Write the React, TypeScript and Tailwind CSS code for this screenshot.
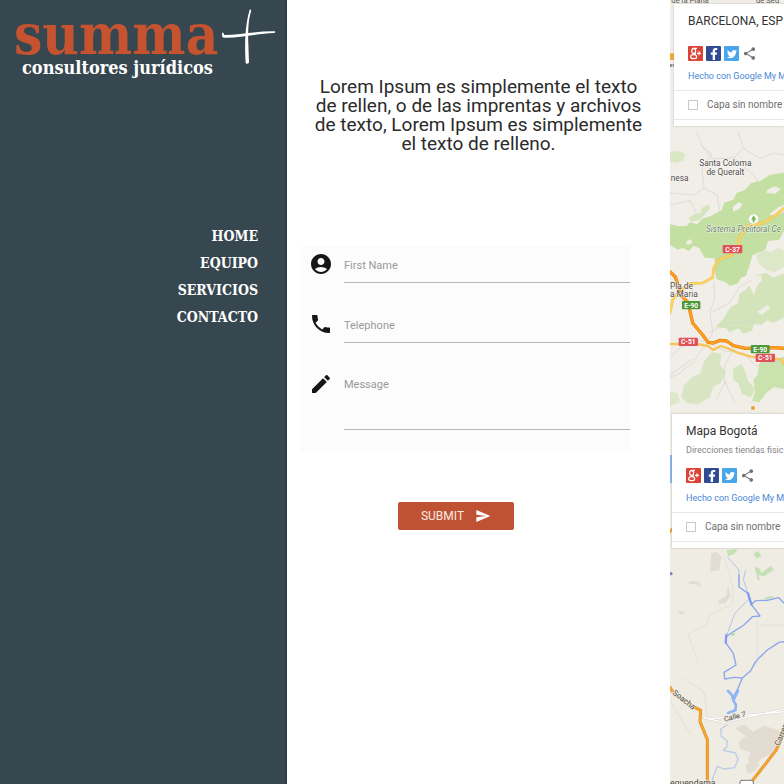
import type { ReactNode } from "react";
import { MdAccountCircle, MdPhone, MdEdit, MdSend, MdShare } from "react-icons/md";
import { FaFacebookF, FaTwitter } from "react-icons/fa";

const slab = "font-['DejaVu_Serif_Condensed','DejaVu_Serif',serif] font-bold";

const navItems = ["HOME", "EQUIPO", "SERVICIOS", "CONTACTO"];

function Sidebar() {
  return (
    <aside className="w-[287px] shrink-0 border-r-2 border-[#2f3e46] bg-[#37474f]">
      <a href="#" className="flex h-[90px] items-start gap-[4px] pl-[14px]">
        <span className={`${slab} flex flex-col pt-[2px]`}>
          <span className="h-[57px] text-[56px] leading-[65px] text-[#c5532f]">summa</span>
          <span className="pl-[8px] text-[18px] leading-[18px] text-white">consultores jurídicos</span>
        </span>
        <svg viewBox="0 0 162 174" className="mt-[8px] h-[58px] w-[54px]" aria-hidden="true">
          <path d="M83 5c3-2 6 0 4 5-9 31-9 64-8 97l2 56c0 5-9 6-10 1-3-52-3-109 12-159z" fill="#fff" />
          <path d="M1 74c3-1 5 4 6 7 50-1 97-12 151-11 3 1 2 4-1 5-52 2-97 13-146 14-6 1-11-1-11-6 1-3 0-7 1-9z" fill="#fff" />
        </svg>
      </a>
      <nav className="mt-[133px] pr-[27px]">
        <ul className="flex flex-col items-end">
          {navItems.map((item) => (
            <li key={item}>
              <a href="#" className={`${slab} block text-[14px] leading-[27px] text-white`}>
                {item}
              </a>
            </li>
          ))}
        </ul>
      </nav>
    </aside>
  );
}

const fieldClass =
  "min-w-0 flex-1 resize-none rounded-none border-b border-[#b5b5b5] bg-transparent text-[11px] leading-[16px] text-[#333] outline-none placeholder:text-[#999]";

function ContactForm() {
  return (
    <form>
      <div className="flex flex-col gap-[25px] bg-[#fcfcfc] pb-[22px] pl-[9px] pt-[2px]">
        <div className="flex gap-[11px]">
          <label htmlFor="first-name" aria-label="First Name" className="pt-[4px]">
            <MdAccountCircle className="size-6 text-[#161616]" />
          </label>
          <input id="first-name" placeholder="First Name" className={`${fieldClass} h-[35px]`} />
        </div>
        <div className="flex gap-[11px]">
          <label htmlFor="telephone" aria-label="Telephone" className="pt-[4px]">
            <MdPhone className="size-6 text-[#161616]" />
          </label>
          <input id="telephone" type="tel" placeholder="Telephone" className={`${fieldClass} h-[35px]`} />
        </div>
        <div className="flex gap-[11px]">
          <label htmlFor="message" aria-label="Message" className="pt-[4px]">
            <MdEdit className="size-6 text-[#161616]" />
          </label>
          <textarea id="message" placeholder="Message" className={`${fieldClass} h-[62px] pt-[9px]`} />
        </div>
      </div>
      <button
        type="submit"
        className="ml-[98px] mt-[50px] flex h-[28px] w-[116px] items-center justify-center gap-[11px] rounded-[2px] bg-[#bf5233] text-[12px] text-[#fbeae4]"
      >
        SUBMIT
        <MdSend className="size-4 text-white" />
      </button>
    </form>
  );
}

function GooglePlusIcon() {
  return (
    <svg viewBox="0 0 45 45" className="size-[15px]" fill="none" stroke="#fff" strokeWidth="3.5" aria-hidden="true">
      <ellipse cx="17" cy="15" rx="6" ry="7" />
      <path d="M14 7h13M21 21l2 5" />
      <ellipse cx="17" cy="32" rx="9" ry="6" />
      <path d="M33 16v12M27 22h12" />
    </svg>
  );
}

function SocialLink({ label, color, children }: { label: string; color: string; children: ReactNode }) {
  return (
    <a href="#" aria-label={label} className={`flex size-[15px] items-center justify-center rounded-[1px] text-white ${color}`}>
      {children}
    </a>
  );
}

function MapCard({ id, title, subtitle }: { id: string; title: string; subtitle?: string }) {
  return (
    <div className="bg-white whitespace-nowrap shadow-[0_0_2px_rgba(0,0,0,0.2)]">
      <div className="px-[14px] pb-[8px] pt-[8px]">
        <h2 className={`text-[12px] leading-[18px] text-[#333] ${subtitle ? "mb-[4px]" : "mb-[16px]"}`}>{title}</h2>
        {subtitle && <p className="mb-[12px] text-[9px] leading-[12px] text-[#858585]">{subtitle}</p>}
        <div className="flex gap-[3px]">
          <SocialLink label="Google+" color="bg-[#da4336]">
            <GooglePlusIcon />
          </SocialLink>
          <SocialLink label="Facebook" color="bg-[#2f4b93]">
            <FaFacebookF className="size-[12px]" />
          </SocialLink>
          <SocialLink label="Twitter" color="bg-[#4aa6ea]">
            <FaTwitter className="size-[10px]" />
          </SocialLink>
          <a href="#" aria-label="Compartir" className="flex size-[15px] items-center justify-center text-[#737373]">
            <MdShare className="size-[15px]" />
          </a>
        </div>
        <a href="#" className="mt-[9px] block text-[9px] leading-[12px] text-[#4a86d8]">
          Hecho con Google My M
        </a>
      </div>
      <div className="flex h-[30px] items-center gap-[9px] border-y border-[#e8e8e8] px-[14px]">
        <input id={id} type="checkbox" className="size-[10px] shrink-0 appearance-none border border-[#c9c9c9] bg-white" />
        <label htmlFor={id} className="text-[10px] leading-[12px] text-[#707070]">
          Capa sin nombre
        </label>
      </div>
      <div className="h-[6px]" />
    </div>
  );
}

function Shield({ x, y, w, color, children }: { x: number; y: number; w: number; color: string; children: string }) {
  return (
    <g>
      <rect x={x} y={y} width={w} height="25" rx="3" fill={color} />
      <text x={x + w / 2} y={y + 20} textAnchor="middle" fontSize="20" fontWeight="700" fill="#fff">
        {children}
      </text>
    </g>
  );
}

function BarcelonaMap() {
  return (
    <svg
      viewBox="0 0 342 1233"
      preserveAspectRatio="xMinYMin slice"
      className="absolute inset-0 size-full font-[Roboto,sans-serif]"
      role="img"
      aria-label="Mapa de Barcelona"
    >
      <rect width="342" height="1233" fill="#f1eee8" />
      <g transform="translate(-18 0)">
        <text x="22" y="9" fontSize="23" fill="#555">de la Plana</text>
        <text x="276" y="9" fontSize="23" fill="#555">de Sed</text>
        <path d="M16 160h18v20H16z" fill="#f5a83a" />
        <text x="16" y="202" fontSize="18" fill="#555">er</text>
      </g>
      <g transform="translate(-18 375)" fill="none">
        <g fill="#c3dfa2">
          <path d="M362 142l-44 8-30 18-26 6-20 22-24 8-10 20-28 10-6 20-32 18-28 10-14 16-22-6-10 10-26 2-24-6v62l24 14 14-6 24 14 30-4 12 20 30 2 2 34h98l14-44 38-16 8-26 34-4 12-24 34-10z" />
          <path d="M18 80l22-2 24 8-6 20-22 8-18-6z" opacity=".5" />
          <path d="M74 280l20-14 16-2 4-16 20-10 4 12-12 14-18 20-26 6z" opacity=".6" />
          <path d="M276 390l26-14 20 6 20-14 20 12v44l-30 18-26-8-20-18z" opacity=".45" />
          <path d="M150 425h104l-8 28-16 6-8 16-24 8-14-12-26-8z" />
          <path d="M278 450l30-6 20 14 34-14v132l-34 18-18-8-18 14-22-4-6 22-28 8-12-16-28 12-10-12-32-4 24-24 20-34 24-14 4-28 20-12z" opacity=".65" />
          <path d="M60 780l28-26 20-8 14-40 22-24 28 4-4 34 18 20-16 34-22 12-10 30-36 22-34-4-16-18z" opacity=".55" />
          <path d="M208 730l24-12 14 26 6 24 22 24-14 26-26-12-10-30-16-12z" opacity=".6" />
          <path d="M284 720l18-24 28 8 32-10v98l-32-6-24 18-20 28-22-4 10-28-6-34 14-20z" opacity=".85" />
          <path d="M18 800l20 4 10 26-30 14z" opacity=".45" />
        </g>
        <g fill="#f1eee8">
          <path d="M206 246l18-14 12 4-10 16-18 8zM310 194l22-10 18 8-16 14-26-2zM316 268l28-22 18-8v22l-30 14zM66 350l14-8 6 12-16 6z" />
          <path d="M250 470l18-14 22-6 4 16-16 18-8 26zM70 382l20-20 20 10-8 22-26 4zM280 560l30-20 10 8-26 22z" />
        </g>
        <g stroke="#d5d2cf" strokeWidth="2">
          <path d="M98 20l16 44 30 24-30 40 6 60-28 22-74-6M222 20l16 50-28 28-66 4-30-40M238 70l50 30 40-16 34 6M210 98l60 54 24 40M120 190l40 20 10 70M18 240l60-14 20 40" />
          <path d="M150 470l2 54-14 34 8 64-14 28M146 560l50-26 30-48 36-20M130 650l-40 60-50 40-22 6M18 700l28-30 40-20 44-4M134 625l50-30 90-6M18 750l70-50M210 672l-26 44-4 50 34 70M130 650l50 28 60 6 36 40 40-20 46 10M186 766l-30 60" />
        </g>
        <g strokeLinejoin="round" strokeLinecap="round">
          <path d="M362 248l-24 20-40 26-50 10-24 38 2 20-24 28-38 14-14 24-4 30-30 16-38 2-32 24-20 24-8 40" stroke="#edb64e" strokeWidth="8" />
          <path d="M362 248l-24 20-40 26-50 10-24 38 2 20-24 28-38 14-14 24-4 30-30 16-38 2-32 24-20 24-8 40" stroke="#ffd85f" strokeWidth="5" />
          <path d="M18 657h80l34 6 16 12 22-12 24 8 26 12 40 12 90 8 12 16" stroke="#f7c65a" strokeWidth="7" />
          <path d="M18 440l16 16 18 56 20 20 14 62 30 36 16 22 16 2 20-8 20 2 20 14 36 8 80-2 40 2" stroke="#e07b12" strokeWidth="10" />
          <path d="M18 440l16 16 18 56 20 20 14 62 30 36 16 22 16 2 20-8 20 2 20 14 36 8 80-2 40 2" stroke="#ff9d1c" strokeWidth="7" />
          <circle cx="267" cy="849" r="6" fill="#f2a02c" />
        </g>
        <circle cx="269" cy="282" r="14" fill="#fff" />
        <path d="M269 271l8 13h-5v8h-6v-8h-5z" fill="#78b85c" />
      </g>
      <g transform="translate(-18 375)" fill="#4c4a48" fontSize="25" stroke="#fff" strokeWidth="3" paintOrder="stroke" strokeOpacity=".8">
        <text x="184" y="122" textAnchor="middle">Santa Coloma</text>
        <text x="184" y="149" textAnchor="middle">de Queralt</text>
        <text x="20" y="167">nesa</text>
        <text x="18" y="491">Pla de</text>
        <text x="18" y="517">a Maria</text>
        <text x="126" y="321" fontStyle="italic" fill="#69845e">Sistema Prelitoral Ce</text>
      </g>
      <g transform="translate(-18 375)">
        <Shield x={176} y={360} w={59} color="#e0525a">C-37</Shield>
        <Shield x={54} y={528} w={55} color="#4e9a3b">E-90</Shield>
        <Shield x={44} y={638} w={58} color="#e0525a">C-51</Shield>
        <Shield x={260} y={660} w={57} color="#4e9a3b">E-90</Shield>
        <Shield x={275} y={686} w={58} color="#e0525a">C-51</Shield>
      </g>
    </svg>
  );
}

function BogotaMap() {
  return (
    <svg
      viewBox="0 0 342 1119"
      preserveAspectRatio="xMinYMin slice"
      className="absolute inset-0 size-full font-[Roboto,sans-serif]"
      role="img"
      aria-label="Mapa de Bogotá"
    >
      <rect width="342" height="1119" fill="#efece3" />
      <g transform="translate(-18 -18)">
        <path d="M18 150h9v84h-9z" fill="#8fb3f2" />
        <path d="M18 374l11-14v12l-11 14z" fill="#f2a02c" />
      </g>
      <g transform="translate(-18 402)" fill="none" strokeLinejoin="round" strokeLinecap="round">
        <g fill="#e2ddd3">
          <path d="M142 24l18-4 12 16-6 40-28 4zM192 120l8 30-14 24-24 4 4-14 20-10zM78 108l28 2 6 16-16-8-24-2zM40 198l24 2-10 10z" />
        </g>
        <g fill="#c5e0b4">
          <path d="M188 16l32-4-8 14-20 8zM268 26l14-8 10 14-14 10zM272 66l14 4 6 14 28-22 10 12-30 20-18-4 6 12-6 6zM300 158l24-6 6 6-26 6z" />
        </g>
        <circle cx="21" cy="86" r="5" fill="#7987cb" />
        <g stroke="#dfdbd3" strokeWidth="2">
          <path d="M178 30l28 90v56l-70 34-8 30-56 28 32 92M280 232v128M290 240h72M60 400l60 40 10 70M20 470l60 100" />
        </g>
        <path d="M190 36L225 75L224 125M245 75L238 104L252 145M255 162L212 206L190 266" stroke="#b9c4e6" strokeWidth="3" />
        <path d="M225 90L225 126L252 145L262 178L288 213L265 215L240 240L205 262L187 275L185 293L208 325L216 360L180 382L182 402L210 397L235 399L260 377L275 350L284 340L310 315L345 292L362 290M262 178L275 167L310 166L344 158L362 176" stroke="#8ba6ea" strokeWidth="4" />
        <path d="M235 399L222 430L208 457" stroke="#8ba6ea" strokeWidth="4" />
        <path d="M252 145L262 178M187 270L185 293" stroke="#7e9dee" strokeWidth="7" />
        <path d="M192 438L204 450L208 466L216 480L214 496L192 504M222 438L208 466" stroke="#91b4f7" strokeWidth="8" />
        <path d="M200 270l6-10 8 6-6 8z" fill="#b4ddb2" />
        <path d="M190 540L170 552L172 574L190 588L188 606L178 616L214 624L222 642L212 668L180 672L160 664L150 690L140 720" stroke="#bccbea" strokeWidth="4" />
        <g fill="#e2ddd0">
          <path d="M214 550l28-12 24 22 34-18 40 12 22 20-22 22-16 30-30 12-18 24-24-14 6-26-30-10-4-22 22-16zM244 660l22-12 20 10-12 20-22 8z" />
        </g>
        <path d="M112 510l20 12 230-22M120 518l60 14 182-40" stroke="#d5d1c9" strokeWidth="7" />
        <path d="M112 510l20 12 230-22M120 518l60 14 182-40" stroke="#fff" strokeWidth="4" />
        <path d="M18 428l14 20 50 34 28 14-2 34 22 54v140" stroke="#d88723" strokeWidth="9" />
        <path d="M18 428l14 20 50 34 28 14-2 34 22 54v140" stroke="#f8a632" strokeWidth="6" />
        <path d="M362 560l-26 56-70 90-10 18" stroke="#d88723" strokeWidth="9" />
        <path d="M362 560l-26 56-70 90-10 18" stroke="#f8a632" strokeWidth="6" />
        <rect x="228" y="706" width="40" height="30" rx="5" fill="#fff" stroke="#777" strokeWidth="3" />
      </g>
      <g transform="translate(-18 402)" fill="#4c4a48" fontSize="24" stroke="#efece3" strokeWidth="4" paintOrder="stroke">
        <text transform="translate(24 446) rotate(38)">Soacha</text>
        <text transform="translate(182 530) rotate(-14)" fontSize="22">Calle 7</text>
        <text transform="translate(346 604) rotate(-68)">Carrera</text>
        <text x="18" y="724" fontSize="26">equendama</text>
      </g>
    </svg>
  );
}

export default function App() {
  return (
    <div className="flex min-h-screen bg-white font-[Roboto,'Liberation_Sans',sans-serif]">
      <Sidebar />
      <main className="min-w-0 flex-1 pt-[77px]">
        <p className="text-center text-[19px] leading-[19px] text-[#2b2b2b]">
          Lorem Ipsum es simplemente el texto
          <br />
          de rellen, o de las imprentas y archivos
          <br />
          de texto, Lorem Ipsum es simplemente
          <br />
          el texto de relleno.
        </p>
        <div className="ml-[13px] mr-[40px] mt-[93px]">
          <ContactForm />
        </div>
      </main>
      <div className="flex w-[114px] shrink-0 flex-col">
        <section className="relative h-[411px] overflow-hidden pl-[4px] pt-[4px]">
          <BarcelonaMap />
          <div className="relative">
            <MapCard id="layer-barcelona" title="BARCELONA, ESP" />
          </div>
        </section>
        <section className="relative min-h-[373px] flex-1 overflow-hidden pl-[2px] pt-[3px]">
          <BogotaMap />
          <div className="relative">
            <MapCard id="layer-bogota" title="Mapa Bogotá" subtitle="Direcciones tiendas fisic" />
          </div>
        </section>
      </div>
    </div>
  );
}
